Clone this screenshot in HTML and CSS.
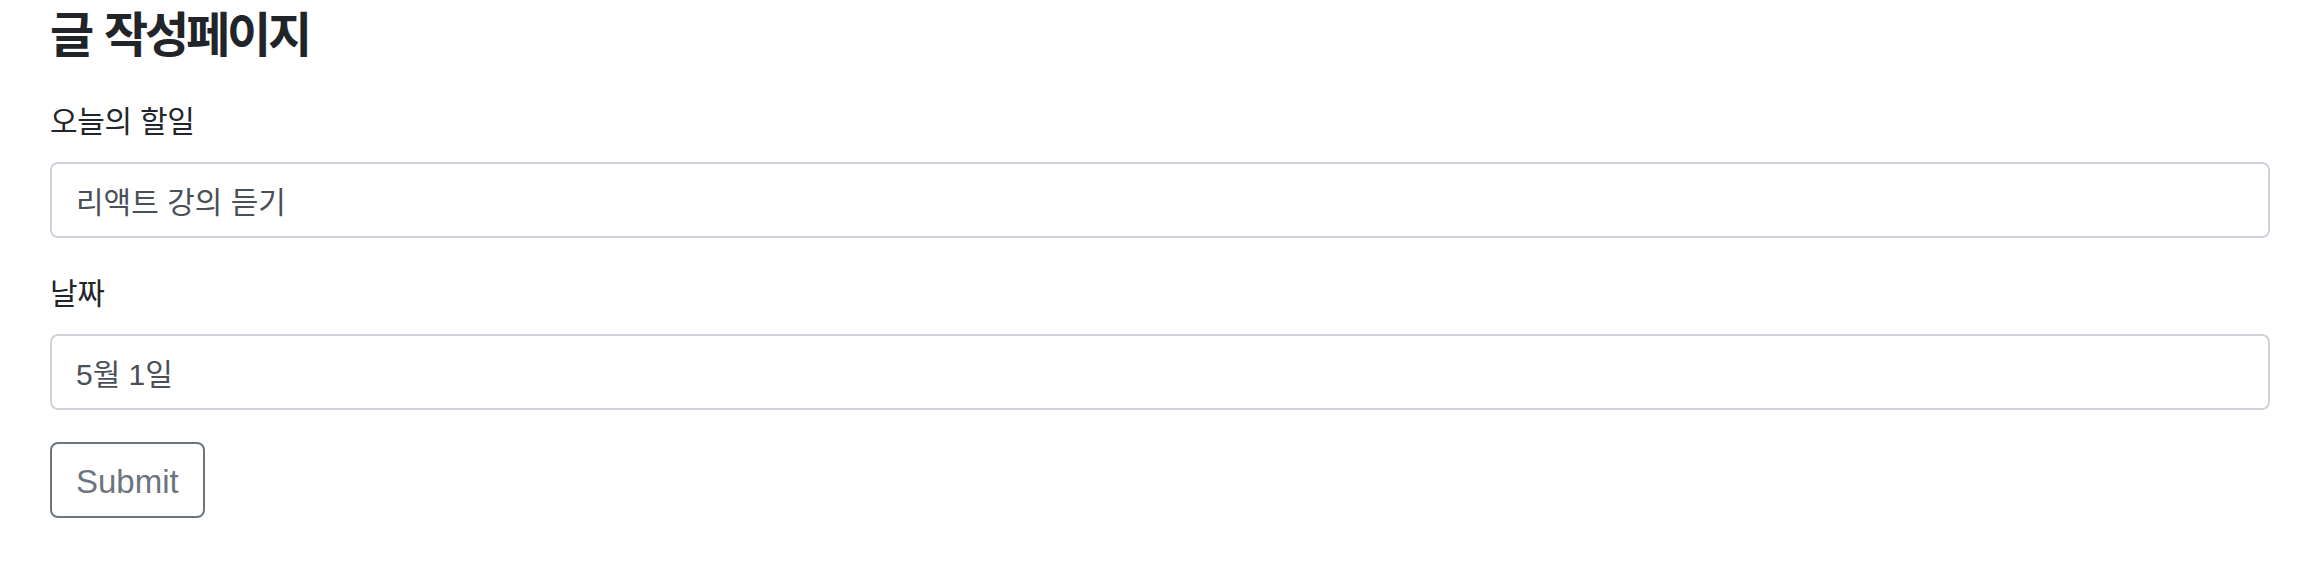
FILE: index.html
```html
<!DOCTYPE html>
<html lang="ko">
<head>
    <meta charset="UTF-8">
    <meta name="viewport" content="width=device-width, initial-scale=1.0">
    <title>글 작성페이지</title>
    <link rel="stylesheet" href="styles.css">
</head>
<body>
    <div class="write-page">
        <h4 class="page-title">글 작성페이지</h4>
        <form class="write-form">
            <div class="form-group">
                <label class="form-label" for="todo">오늘의 할일</label>
                <input class="form-control" type="text" id="todo" value="리액트 강의 듣기">
            </div>
            <div class="form-group">
                <label class="form-label" for="date">날짜</label>
                <input class="form-control" type="text" id="date" value="5월 1일">
            </div>
            <button class="btn-outline" type="submit">Submit</button>
        </form>
    </div>
</body>
</html>
```

FILE: styles.css
```css
body {
    margin: 0;
    padding: 0;
    background-color: #fff;
    font-family: "Liberation Sans", "Noto Sans CJK KR", sans-serif;
    color: #212529;
}
.write-page {
    padding: 7px 48px 0 50px;
}
.page-title {
    margin: 0 0 33px 0;
    font-size: 48px;
    line-height: 58px;
    font-weight: 700;
    letter-spacing: -3.2px;
    word-spacing: 3px;
    color: #212529;
}
.form-group {
    margin-bottom: 32px;
}
.form-label {
    display: block;
    margin-bottom: 16px;
    font-size: 30px;
    line-height: 48px;
    letter-spacing: -0.3px;
}
.form-control {
    display: block;
    width: 100%;
    height: 76px;
    box-sizing: border-box;
    padding: 12px 24px;
    font-family: inherit;
    font-size: 30px;
    letter-spacing: 0;
    color: #495057;
    background-color: #fff;
    border: 2px solid #ced4da;
    border-radius: 8px;
    outline: none;
}
.btn-outline {
    display: block;
    height: 76px;
    margin-top: 1px;
    box-sizing: border-box;
    padding: 14px 24px 10px;
    font-family: inherit;
    font-size: 33px;
    line-height: 48px;
    color: #6c757d;
    background-color: transparent;
    border: 2px solid #6c757d;
    border-radius: 8px;
    cursor: pointer;
}
```
